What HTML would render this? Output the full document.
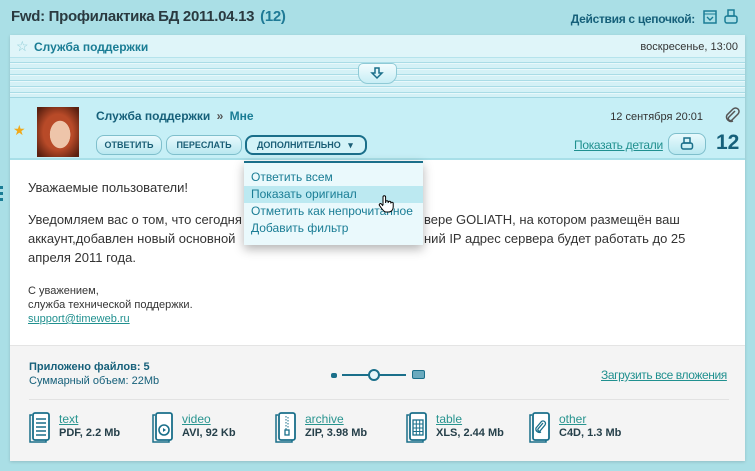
<!DOCTYPE html>
<html><head><meta charset="utf-8"><style>
*{margin:0;padding:0;box-sizing:border-box}
body{width:755px;height:471px;background:#aadfe6;font-family:"Liberation Sans",sans-serif;position:relative;overflow:hidden;font-size:12px;color:#333}
.a{position:absolute}
.title{left:11px;top:8px;font-size:15px;font-weight:bold;color:#2a3a40;letter-spacing:-0.3px}
.title span{color:#1f7a96;margin-left:6px}
.teal{color:#1a7d95}
.dark{color:#16607a}
.btn{position:absolute;top:135px;height:20px;border:1px solid #7fbfcc;border-radius:8px;background:linear-gradient(#e8fafd,#b9e8f0);font-size:9px;font-weight:bold;color:#1a5e76;text-align:center;line-height:18px}
.lnk{text-decoration:underline;color:#20908f}
.dd div{height:17px;line-height:17px;padding-left:7px;color:#1a7d95;font-size:12px}
.file{position:absolute;top:412px;font-size:12px}
.file b{display:block;color:#26404a;font-size:11px;margin-top:1px}
.file u{color:#28948f}
.fic{position:absolute;top:412px}
.bt{font-size:13px;color:#333;white-space:nowrap}
</style></head><body>
<div class="a title">Fwd: Профилактика БД 2011.04.13<span>(12)</span></div>
<div class="a dark" style="right:60px;top:12px;font-size:12px;font-weight:bold;letter-spacing:-0.3px">Действия с цепочкой:</div>
<svg class="a" style="left:702px;top:9px" width="16" height="16"><rect x="2" y="2" width="12" height="12" fill="none" stroke="#1a7d95" stroke-width="1.5"/><line x1="2" y1="5" x2="14" y2="5" stroke="#1a7d95"/><path d="M5 8l3 3 3-3" fill="none" stroke="#1a7d95" stroke-width="1.4"/></svg>
<svg class="a" style="left:723px;top:9px" width="16" height="16"><rect x="5" y="1" width="6" height="6" fill="none" stroke="#1a7d95" stroke-width="1.5"/><rect x="2" y="7" width="12" height="7" rx="2" fill="none" stroke="#1a7d95" stroke-width="1.5"/></svg>

<div class="a" style="left:10px;top:35px;width:735px;height:426px;background:#fff;box-shadow:0 1px 3px rgba(0,0,0,.15)"></div>
<div class="a" style="left:10px;top:35px;width:735px;height:23px;background:#dff5f9;border-bottom:1px solid #b5e3ec"></div>
<div class="a" style="left:16px;top:38px;color:#8bcbd6;font-size:14px">☆</div>
<div class="a teal" style="left:34px;top:40px;font-weight:bold;font-size:12px">Служба поддержки</div>
<div class="a" style="right:17px;top:41px;font-size:11px;color:#333">воскресенье, 13:00</div>
<div class="a" style="left:10px;top:58px;width:735px;height:40px;background:repeating-linear-gradient(#d4f1f6 0,#d4f1f6 4px,#a9dce6 4px,#a9dce6 5px,#e8f8fb 5px,#e8f8fb 6px);border-bottom:1px solid #9fd6e1"></div>
<div class="a" style="left:358px;top:63px;width:39px;height:21px;border:1px solid #8fcad6;border-radius:5px 5px 10px 10px;background:linear-gradient(#f2fcfe,#c8eef5)"></div>
<svg class="a" style="left:370px;top:66px" width="14" height="14"><path d="M5 2h4v5h3l-5 5-5-5h3z" fill="none" stroke="#1a6f8a" stroke-width="1.5"/></svg>

<div class="a" style="left:10px;top:98px;width:735px;height:62px;background:#c6eff6;border-bottom:2px solid #a8dfe8"></div>
<div class="a" style="left:13px;top:122px;color:#f0a818;font-size:14px">★</div>
<div class="a" style="left:37px;top:107px;width:42px;height:50px;background:radial-gradient(ellipse 40% 45% at 55% 55%,#eec5aa 0 60%,transparent 62%),radial-gradient(ellipse at 50% 50%,#b84a28 0 50%,#5a2010 90%)"></div>
<div class="a dark" style="left:96px;top:109px;font-weight:bold;font-size:12px">Служба поддержки <span style="color:#555;margin:0 3px">»</span> <span class="teal">Мне</span></div>
<div class="a" style="right:52px;top:111px;font-size:11px">12 сентября 20:01</div>
<svg class="a" style="left:724px;top:107px" width="16" height="16"><path d="M11 4L5 10a2 2 0 003 3l6-6a3.5 3.5 0 00-5-5L3 8a4.5 4.5 0 006 6" fill="none" stroke="#555" stroke-width="1.5"/></svg>
<div class="btn" style="left:96px;width:66px">ОТВЕТИТЬ</div>
<div class="btn" style="left:166px;width:76px">ПЕРЕСЛАТЬ</div>
<div class="btn" style="left:245px;width:122px;border:2px solid #1a6f8a;background:#d3f3f8;line-height:16px;text-align:left;padding-left:10px">ДОПОЛНИТЕЛЬНО &nbsp;&nbsp;▾</div>
<div class="a lnk" style="left:574px;top:138px;font-size:12px;letter-spacing:-0.3px">Показать детали</div>
<div class="btn" style="left:668px;width:38px;top:133px;height:22px"></div>
<svg class="a" style="left:680px;top:137px" width="14" height="14"><rect x="4" y="1" width="6" height="5" fill="none" stroke="#1a6f8a" stroke-width="1.5"/><rect x="1.5" y="6" width="11" height="6" rx="2" fill="none" stroke="#1a6f8a" stroke-width="1.5"/></svg>
<div class="a dark" style="left:716px;top:131px;font-size:21px;font-weight:bold">12</div>

<div class="a" style="left:0;top:186px;width:3px;height:18px;background:repeating-linear-gradient(#1a7d95 0 3px,transparent 3px 6px)"></div>
<div class="a bt" style="left:28px;top:180px">Уважаемые пользователи!</div>
<div class="a bt" style="left:28px;top:212px">Уведомляем вас о том, что сегодня</div>
<div class="a bt" style="left:28px;top:231px">аккаунт,добавлен новый основной</div>
<div class="a bt" style="left:28px;top:250px">апреля 2011 года.</div>
<div class="a bt" style="left:424px;top:212px;width:240px;text-align:justify;text-align-last:justify">вере GOLIATH, на котором размещён ваш</div>
<div class="a bt" style="left:424px;top:231px;width:234px;text-align-last:justify">ний IP адрес сервера будет работать до 25</div>
<div class="a" style="left:28px;top:284px;font-size:11px;line-height:14px;color:#333">С уважением,<br>служба технической поддержки.<br><span class="lnk">support@timeweb.ru</span></div>

<div class="a dd" style="left:244px;top:161px;width:179px;height:84px;background:#eaf9fc;border-top:2px solid #1a6f8a;box-shadow:0 4px 10px rgba(0,0,0,.3);padding-top:6px">
<div>Ответить всем</div><div style="background:#bce9f1">Показать оригинал</div><div>Отметить как непрочитанное</div><div>Добавить фильтр</div></div>
<svg class="a" style="left:378px;top:194px" width="16" height="20"><path d="M5 11V3a1.3 1.3 0 012.6 0v6 M7.6 8a1.3 1.3 0 012.6 0v1 M10.2 8.5a1.3 1.3 0 012.6 0v1 M12.8 9a1.3 1.3 0 012.4 0v4c0 3-2 5-4.5 5H8c-2 0-3-2-4-3L1.5 11.5a1.2 1.2 0 012-1.4L5 12" fill="#fff" stroke="#000" stroke-width="1"/></svg>

<div class="a" style="left:10px;top:345px;width:735px;height:116px;background:#f4f4f4;border-top:1px solid #e4e4e4"></div>
<div class="a dark" style="left:29px;top:361px;font-weight:bold;font-size:11px">Приложено файлов: 5</div>
<div class="a" style="left:29px;top:375px;font-size:11px;color:#16607a">Суммарный объем: 22Mb</div>
<div class="a" style="left:331px;top:373px;width:6px;height:5px;background:#1a6f8a;border-radius:2px"></div>
<div class="a" style="left:342px;top:374px;width:64px;height:2px;background:#1a6f8a"></div>
<div class="a" style="left:368px;top:369px;width:12px;height:12px;border:2px solid #1a6f8a;border-radius:50%;background:#e6f6fa"></div>
<div class="a" style="left:412px;top:370px;width:13px;height:9px;background:#6aaabe;border:1px solid #1a6f8a;border-radius:2px"></div>
<div class="a lnk" style="left:601px;top:368px;font-size:12px;letter-spacing:-0.4px">Загрузить все вложения</div>
<div class="a" style="left:29px;top:399px;width:700px;height:1px;background:#e2e2e2"></div>

<svg class="fic" style="left:28px" width="24" height="32"><path d="M4 3h-2v27h16v-2" fill="none" stroke="#1a6f8a" stroke-width="1.5"/><rect x="5" y="1" width="16" height="27" rx="2" fill="#fff" stroke="#1a6f8a" stroke-width="1.8"/><path d="M8 7h10M8 11h10M8 15h10M8 19h10M8 23h10" stroke="#1a6f8a" stroke-width="1.5"/></svg>
<div class="file" style="left:59px"><u>text</u><b>PDF, 2.2 Mb</b></div>
<svg class="fic" style="left:151px" width="24" height="32"><path d="M4 3h-2v27h16v-2" fill="none" stroke="#1a6f8a" stroke-width="1.5"/><rect x="5" y="1" width="16" height="27" rx="2" fill="#fff" stroke="#1a6f8a" stroke-width="1.8"/><circle cx="13" cy="18" r="5" fill="none" stroke="#1a6f8a" stroke-width="1.6"/><path d="M12 16v4l3-2z" fill="#1a6f8a"/></svg>
<div class="file" style="left:182px"><u>video</u><b>AVI, 92 Kb</b></div>
<svg class="fic" style="left:274px" width="24" height="32"><path d="M4 3h-2v27h16v-2" fill="none" stroke="#1a6f8a" stroke-width="1.5"/><rect x="5" y="1" width="16" height="27" rx="2" fill="#fff" stroke="#1a6f8a" stroke-width="1.8"/><path d="M12 4v14M14 5v12" stroke="#1a6f8a" stroke-width="1" stroke-dasharray="1.5 1.5"/><rect x="11" y="18" width="4" height="5" fill="none" stroke="#1a6f8a" stroke-width="1.3"/></svg>
<div class="file" style="left:305px"><u>archive</u><b>ZIP, 3.98 Mb</b></div>
<svg class="fic" style="left:405px" width="24" height="32"><path d="M4 3h-2v27h16v-2" fill="none" stroke="#1a6f8a" stroke-width="1.5"/><rect x="5" y="1" width="16" height="27" rx="2" fill="#fff" stroke="#1a6f8a" stroke-width="1.8"/><rect x="8" y="8" width="10" height="15" fill="none" stroke="#1a6f8a" stroke-width="1.3"/><path d="M8 12h10M8 16h10M8 19.5h10M11.3 8v15M14.7 8v15" stroke="#1a6f8a" stroke-width="1"/></svg>
<div class="file" style="left:436px"><u>table</u><b>XLS, 2.44 Mb</b></div>
<svg class="fic" style="left:528px" width="24" height="32"><path d="M4 3h-2v27h16v-2" fill="none" stroke="#1a6f8a" stroke-width="1.5"/><rect x="5" y="1" width="16" height="27" rx="2" fill="#fff" stroke="#1a6f8a" stroke-width="1.8"/><path d="M15 11l-5 6a1.5 1.5 0 002 2l5-6a2.5 2.5 0 00-4-3l-5 6a3.5 3.5 0 005 4" fill="none" stroke="#1a6f8a" stroke-width="1.3"/></svg>
<div class="file" style="left:559px"><u>other</u><b>C4D, 1.3 Mb</b></div>
</body></html>
